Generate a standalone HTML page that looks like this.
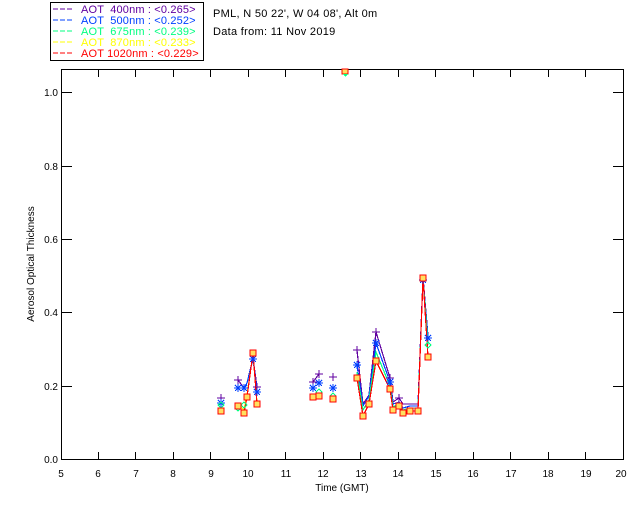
<!DOCTYPE html>
<html><head><style>
html,body{margin:0;padding:0;background:#fff;}
svg text{font-family:"Liberation Sans",sans-serif;}
</style></head><body>
<svg width="640" height="512" xmlns="http://www.w3.org/2000/svg" shape-rendering="crispEdges">
<rect width="640" height="512" fill="#fff"/>
<!-- legend -->
<rect x="50.5" y="2.5" width="153" height="58" fill="none" stroke="#000"/>
<g font-size="11" letter-spacing="0.15">
<line x1="53" y1="9" x2="74" y2="9" stroke="#6000a0" stroke-dasharray="5,2"/>
<text x="81" y="13" fill="#6000a0" xml:space="preserve">AOT  400nm : &lt;0.265&gt;</text>
<line x1="53" y1="20" x2="74" y2="20" stroke="#0040ff" stroke-dasharray="5,2"/>
<text x="81" y="24" fill="#0040ff" xml:space="preserve">AOT  500nm : &lt;0.252&gt;</text>
<line x1="53" y1="31" x2="74" y2="31" stroke="#00ff80" stroke-dasharray="5,2"/>
<text x="81" y="35" fill="#00ff80" xml:space="preserve">AOT  675nm : &lt;0.239&gt;</text>
<line x1="53" y1="42" x2="74" y2="42" stroke="#ffff00" stroke-dasharray="5,2"/>
<text x="81" y="46" fill="#ffff00" xml:space="preserve">AOT  870nm : &lt;0.233&gt;</text>
<line x1="53" y1="53" x2="74" y2="53" stroke="#ff0000" stroke-dasharray="5,2"/>
<text x="81" y="57" fill="#ff0000" xml:space="preserve">AOT 1020nm : &lt;0.229&gt;</text>
</g>
<text x="213" y="17" font-size="11" letter-spacing="0.3">PML, N 50 22', W 04 08', Alt 0m</text>
<text x="213" y="35" font-size="11" letter-spacing="0.3">Data from: 11 Nov 2019</text>
<!-- axes -->
<rect x="61.5" y="69.5" width="562" height="390" fill="none" stroke="#000"/>
<g stroke="#000">
<path d="M98.5 459v-7M135.5 459v-7M173.5 459v-7M210.5 459v-7M248.5 459v-7M285.5 459v-7M323.5 459v-7M360.5 459v-7M398.5 459v-7M435.5 459v-7M473.5 459v-7M510.5 459v-7M548.5 459v-7M585.5 459v-7"/>
<path d="M98.5 70v7M135.5 70v7M173.5 70v7M210.5 70v7M248.5 70v7M285.5 70v7M323.5 70v7M360.5 70v7M398.5 70v7M435.5 70v7M473.5 70v7M510.5 70v7M548.5 70v7M585.5 70v7"/>
<path d="M62 92.5h10M62 166.5h10M62 239.5h10M62 312.5h10M62 386.5h10"/>
<path d="M623 92.5h-10M623 166.5h-10M623 239.5h-10M623 312.5h-10M623 386.5h-10"/>
</g>
<g font-size="10" text-anchor="end">
<text x="58" y="96">1.0</text><text x="58" y="170">0.8</text><text x="58" y="243">0.6</text>
<text x="58" y="316">0.4</text><text x="58" y="390">0.2</text><text x="58" y="463">0.0</text>
</g>
<g font-size="10" text-anchor="middle">
<text x="61" y="477">5</text><text x="98" y="477">6</text><text x="136" y="477">7</text><text x="173" y="477">8</text>
<text x="211" y="477">9</text><text x="248" y="477">10</text><text x="286" y="477">11</text><text x="323" y="477">12</text>
<text x="361" y="477">13</text><text x="398" y="477">14</text><text x="436" y="477">15</text><text x="473" y="477">16</text>
<text x="511" y="477">17</text><text x="548" y="477">18</text><text x="586" y="477">19</text><text x="621" y="477">20</text>
<text x="342" y="491">Time (GMT)</text>
</g>
<text transform="translate(34,264) rotate(-90)" font-size="10" text-anchor="middle">Aerosol Optical Thickness</text>
<!-- data lines -->
<g fill="none" stroke-width="1.2">
<polyline stroke="#6000a0" points="238,380 244,388 247,383 253,358 257,387"/>
<polyline stroke="#0040ff" points="238,388 244,388 247,383 253,359 257,392"/>
<polyline stroke="#ffff00" points="238,404 244,410 247,395 253,354 257,402"/>
<polyline stroke="#ff0000" points="238,406 244,413 247,397 253,353 257,404"/>
<polyline stroke="#6000a0" points="313,382 319,374"/>
<polyline stroke="#6000a0" points="357,350 363,404 369,395 376,332 390,378 393,402 399,398 403,404 410,404 418,404 423,277 428,336"/>
<polyline stroke="#0040ff" points="357,365 363,406 369,396 376,343 390,382 393,404 399,402 403,408 410,406 418,406 423,280 428,338"/>
<polyline stroke="#00ff80" points="357,372 363,410 369,400 376,352 390,386 393,407 399,404 403,410 410,408 418,408 423,279 428,345"/>
<polyline stroke="#ff0000" points="357,378 363,416 369,404 376,361 390,389 393,410 399,406 403,413 410,411 418,411 423,278 428,357"/>
</g>
<!-- markers -->
<g stroke="#6000a0" fill="none">
<path d="M221 394v8M217 398h8M238 376v8M234 380h8M244 384v8M240 388h8M257 383v8M253 387h8M313 378v8M309 382h8M319 370v8M315 374h8M333 373v8M329 377h8M357 346v8M353 350h8M376 328v8M372 332h8M390 374v8M386 378h8M399 394v8M395 398h8"/>
</g>
<g stroke="#0040ff" fill="none">
<path d="M218 400l6 6M218 406l6-6M221 399v8M217 403h8M235 385l6 6M235 391l6-6M238 384v8M234 388h8M241 385l6 6M241 391l6-6M244 384v8M240 388h8M250 356l6 6M250 362l6-6M253 355v8M249 359h8M254 389l6 6M254 395l6-6M257 388v8M253 392h8M310 385l6 6M310 391l6-6M313 384v8M309 388h8M316 380l6 6M316 386l6-6M319 379v8M315 383h8M330 385l6 6M330 391l6-6M333 384v8M329 388h8M354 362l6 6M354 368l6-6M357 361v8M353 365h8M373 340l6 6M373 346l6-6M376 339v8M372 343h8M387 379l6 6M387 385l6-6M390 378v8M386 382h8M420 277l6 6M420 283l6-6M423 276v8M419 280h8M425 335l6 6M425 341l6-6M428 334v8M424 338h8"/>
</g>
<g stroke="#00ff80" fill="none"><path d="M221 402l3 3-3 3-3-3zM238 405l3 3-3 3-3-3zM244 402l3 3-3 3-3-3zM319 389l3 3-3 3-3-3zM333 393l3 3-3 3-3-3zM428 342l3 3-3 3-3-3z"/></g>
<g stroke="#ff0000" stroke-width="1.2" fill="#ffe060">
<rect x="218" y="408" width="6" height="6"/><rect x="235" y="403" width="6" height="6"/><rect x="241" y="410" width="6" height="6"/>
<rect x="244" y="394" width="6" height="6"/><rect x="250" y="350" width="6" height="6"/><rect x="254" y="401" width="6" height="6"/>
<rect x="310" y="394" width="6" height="6"/><rect x="316" y="393" width="6" height="6"/><rect x="330" y="396" width="6" height="6"/>
<rect x="354" y="375" width="6" height="6"/><rect x="360" y="413" width="6" height="6"/><rect x="366" y="401" width="6" height="6"/>
<rect x="373" y="358" width="6" height="6"/><rect x="387" y="386" width="6" height="6"/><rect x="390" y="407" width="6" height="6"/>
<rect x="396" y="403" width="6" height="6"/><rect x="400" y="410" width="6" height="6"/><rect x="407" y="408" width="6" height="6"/>
<rect x="415" y="408" width="6" height="6"/><rect x="420" y="275" width="6" height="6"/><rect x="425" y="354" width="6" height="6"/>
<rect x="342" y="69" width="6" height="5"/>
</g>
<path d="M343 74h5l-2.5 3z" fill="#00ff80"/>
</svg>
</body></html>
